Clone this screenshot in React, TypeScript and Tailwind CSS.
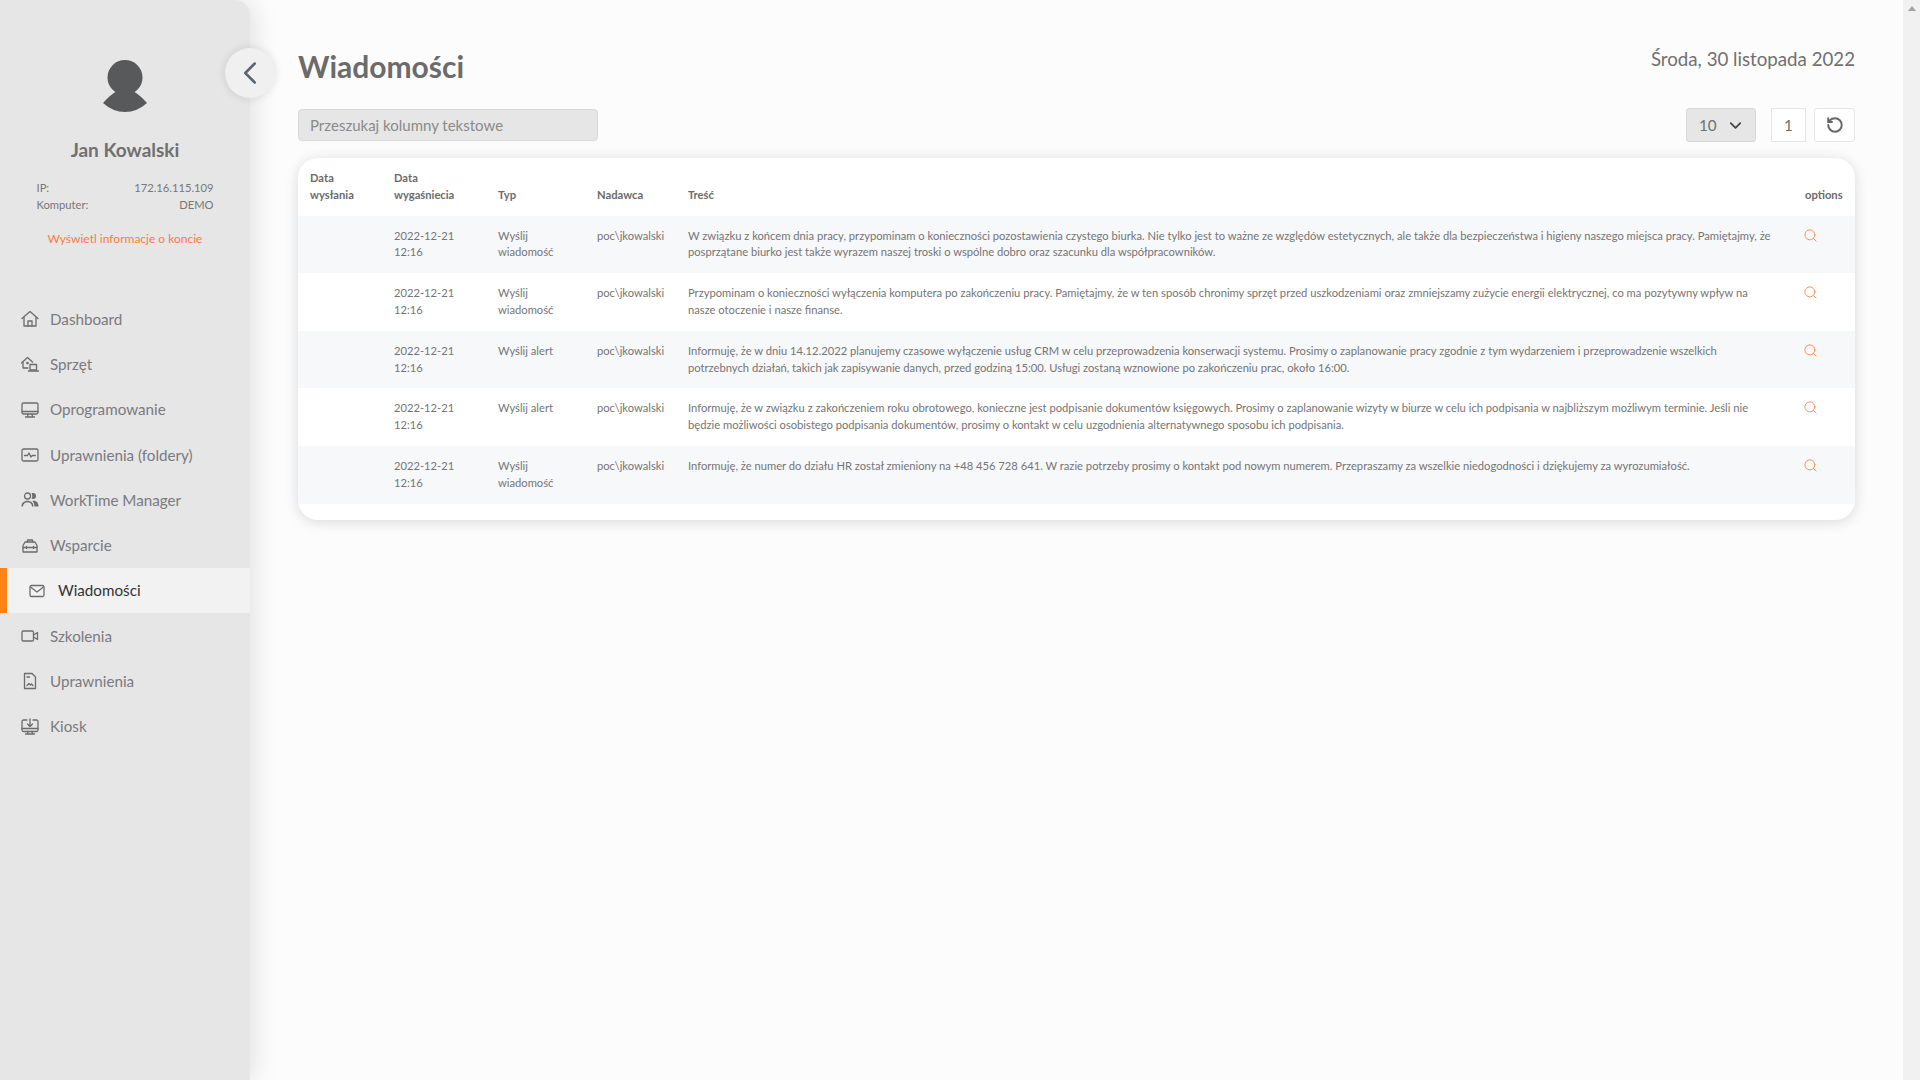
import React from 'react';
import { ChevronDown, ChevronLeft, RotateCcw, Search } from 'lucide-react';

const iconProps = {
  width: 18,
  height: 18,
  viewBox: '0 0 18 18',
  fill: 'none',
  stroke: 'currentColor',
  strokeWidth: 1.3,
  strokeLinecap: 'round' as const,
  strokeLinejoin: 'round' as const,
};

const HomeIcon = () => (
  <svg {...iconProps}>
    <path d="M1 8.500 9 1.500l8 7" />
    <path d="M3 7.500V16h12V7.500" />
    <path d="M7 16v-5h4v5" />
  </svg>
);

const HardwareIcon = () => (
  <svg {...iconProps}>
    <path d="M.5 8 6.500 2.500 11.500 7" />
    <path d="M2 7.500V13h5" />
    <circle cx="6.500" cy="8" r="0.700" fill="currentColor" />
    <rect x="9" y="9.500" width="6.500" height="5.500" />
    <path d="M7.500 16h10" />
  </svg>
);

const SoftwareIcon = () => (
  <svg {...iconProps}>
    <rect x="1" y="2" width="16" height="11" rx="1.500" />
    <path d="M1 10.500h16M7 13l-.5 3M11 13l.5 3M4.500 16h9" />
  </svg>
);

const ActivityIcon = () => (
  <svg {...iconProps}>
    <rect x="1" y="3" width="16" height="12" rx="1.500" />
    <path d="M3.500 9.500h3l1.500-2.500 2 4 1.300-1.500h3" />
  </svg>
);

const UsersIcon = () => (
  <svg width="18" height="18" viewBox="0 0 18 18" fill="currentColor">
    <circle cx="6.500" cy="5" r="3" fill="none" stroke="currentColor" strokeWidth="1.300" />
    <path d="M12 2a3 3 0 0 1 0 6c-.6 0-1-.2-1.400-.4a4.800 4.800 0 0 0 0-5.200C11 2.200 11.400 2 12 2Z" />
    <path d="M.5 15.500c0-3.500 2.500-5.700 6-5.700s6 2.200 6 5.700h-1.500c0-2.500-1.800-4.200-4.500-4.200S2 13 2 15.500Z" />
    <path d="M13.500 15.500c0-2-.6-4-2-5.500 3.700-.8 6 1.800 6 5.500Z" />
  </svg>
);

const ToolboxIcon = () => (
  <svg {...iconProps}>
    <path d="M2 8.500 4 5h10l2 3.500V15H2Z" />
    <path d="M6.500 5V3h5v2M2 10.500h14" />
    <path d="M5.500 9.500v2M12.500 9.500v2" />
  </svg>
);

const MailIcon = () => (
  <svg width="16" height="16" viewBox="0 0 16 16" fill="none" stroke="currentColor" strokeWidth="1.300" strokeLinejoin="round">
    <rect x="1" y="2.500" width="14" height="11" rx="1.500" />
    <path d="m1.500 4 6.500 5 6.500-5" />
  </svg>
);

const VideoIcon = () => (
  <svg {...iconProps}>
    <rect x="1" y="4" width="11.500" height="10" rx="1.200" />
    <path d="m12.500 8 4-2.500v7l-4-2.500" />
  </svg>
);

const DocIcon = () => (
  <svg {...iconProps}>
    <path d="M3.500 1.500H11L14.500 5v11.500h-11Z" />
    <path d="M6 5h2.500M6 13.500l2-2 1.500 1.500 1-1 1.500 1.500" />
  </svg>
);

const KioskIcon = () => (
  <svg {...iconProps}>
    <path d="M6 2H2.500A1.500 1.500 0 0 0 1 3.500V12a1.500 1.500 0 0 0 1.500 1.500h13A1.500 1.500 0 0 0 17 12V3.500A1.500 1.500 0 0 0 15.500 2H12" />
    <path d="M9 1v7M6.500 6 9 8.500 11.500 6M1 10.500h16M7 13.500l-.5 2.500M11 13.500l.5 2.500M4.500 16h9" />
  </svg>
);

const menu = [
  { label: 'Dashboard', icon: <HomeIcon /> },
  { label: 'Sprzęt', icon: <HardwareIcon /> },
  { label: 'Oprogramowanie', icon: <SoftwareIcon /> },
  { label: 'Uprawnienia (foldery)', icon: <ActivityIcon /> },
  { label: 'WorkTime Manager', icon: <UsersIcon /> },
  { label: 'Wsparcie', icon: <ToolboxIcon /> },
  { label: 'Wiadomości', icon: <MailIcon />, active: true },
  { label: 'Szkolenia', icon: <VideoIcon /> },
  { label: 'Uprawnienia', icon: <DocIcon /> },
  { label: 'Kiosk', icon: <KioskIcon /> },
];

const rows = [
  {
    type: 'Wyślij wiadomość',
    body: 'W związku z końcem dnia pracy, przypominam o konieczności pozostawienia czystego biurka. Nie tylko jest to ważne ze względów estetycznych, ale także dla bezpieczeństwa i higieny naszego miejsca pracy. Pamiętajmy, że posprzątane biurko jest także wyrazem naszej troski o wspólne dobro oraz szacunku dla współpracowników.',
  },
  {
    type: 'Wyślij wiadomość',
    body: 'Przypominam o konieczności wyłączenia komputera po zakończeniu pracy. Pamiętajmy, że w ten sposób chronimy sprzęt przed uszkodzeniami oraz zmniejszamy zużycie energii elektrycznej, co ma pozytywny wpływ na nasze otoczenie i nasze finanse.',
  },
  {
    type: 'Wyślij alert',
    body: 'Informuję, że w dniu 14.12.2022 planujemy czasowe wyłączenie usług CRM w celu przeprowadzenia konserwacji systemu. Prosimy o zaplanowanie pracy zgodnie z tym wydarzeniem i przeprowadzenie wszelkich potrzebnych działań, takich jak zapisywanie danych, przed godziną 15:00. Usługi zostaną wznowione po zakończeniu prac, około 16:00.',
  },
  {
    type: 'Wyślij alert',
    body: 'Informuję, że w związku z zakończeniem roku obrotowego, konieczne jest podpisanie dokumentów księgowych. Prosimy o zaplanowanie wizyty w biurze w celu ich podpisania w najbliższym możliwym terminie. Jeśli nie będzie możliwości osobistego podpisania dokumentów, prosimy o kontakt w celu uzgodnienia alternatywnego sposobu ich podpisania.',
  },
  {
    type: 'Wyślij wiadomość',
    body: 'Informuję, że numer do działu HR został zmieniony na +48 456 728 641. W razie potrzeby prosimy o kontakt pod nowym numerem. Przepraszamy za wszelkie niedogodności i dziękujemy za wyrozumiałość.',
  },
];

const Sidebar = () => (
  <aside className="relative w-[250px] h-[1080px] shrink-0 bg-[#e6e6e6] rounded-tr-[15px] shadow-[5px_0_25px_rgba(0,0,0,0.1)] z-10">
    <div className="flex flex-col items-center pt-[60px]">
      <svg width="44" height="52" viewBox="0 0 44 52" className="text-[#58595b]">
        <circle cx="22" cy="17.500" r="17.500" fill="currentColor" />
        <path d="M0 43 Q7 35 14 31 Q22 36 30 31 Q37 35 44 43 Q34 52 22 52 Q10 52 0 43Z" fill="currentColor" />
      </svg>
      <div className="mt-[26px] text-[19px] leading-[24px] font-bold text-[#707070]">Jan Kowalski</div>
      <div className="mt-[17px] w-[177px] text-[11.200px] leading-[17px] text-[#777]">
        <div className="flex justify-between">
          <span>IP:</span>
          <span>172.16.115.109</span>
        </div>
        <div className="flex justify-between">
          <span>Komputer:</span>
          <span>DEMO</span>
        </div>
      </div>
      <div className="mt-[17px] text-[12px] leading-[17px] text-[#ff7b3d]">Wyświetl informacje o koncie</div>
    </div>
    <nav className="mt-[49.400px]">
      {menu.map(item => (
        <div
          key={item.label}
          className={
            item.active
              ? 'flex items-center h-[45.300px] pl-[22px] bg-[#f2f2f2] border-l-[7px] border-[#ff8317] text-[15.200px] text-[#333]'
              : 'flex items-center h-[45.300px] pl-[21px] text-[15.200px] text-[#7a7a7f]'
          }
        >
          <span className="w-[29px] text-[#6c6c6c]">{item.icon}</span>
          <span>{item.label}</span>
        </div>
      ))}
    </nav>
  </aside>
);

const MessagesTable = () => (
  <div className="mt-[16px] h-[362px] bg-white rounded-[20px] shadow-[0_2px_14px_rgba(0,0,0,0.14)] overflow-hidden">
    <table className="w-full table-fixed border-collapse text-[11.200px] leading-[16.800px] text-[#757575] text-left">
      <thead>
        <tr className="align-bottom text-[#6b6b6b]">
          <th className="w-[84px] p-[12px] font-bold">Data wysłania</th>
          <th className="w-[104px] p-[12px] font-bold">Data wygaśniecia</th>
          <th className="w-[99px] p-[12px] font-bold">Typ</th>
          <th className="w-[91px] p-[12px] font-bold">Nadawca</th>
          <th className="p-[12px] font-bold">Treść</th>
          <th className="w-[63px] py-[12px] pl-[13px] pr-0 font-bold">options</th>
        </tr>
      </thead>
      <tbody>
        {rows.map((row, i) => (
          <tr key={i} className="h-[57.600px] align-top odd:bg-[#f7f8fa]">
            <td className="p-[12px]" />
            <td className="p-[12px]">2022-12-21 12:16</td>
            <td className="p-[12px]">{row.type}</td>
            <td className="p-[12px] pr-0">poc\jkowalski</td>
            <td className="py-[12px] pl-[12px] pr-[17px]">{row.body}</td>
            <td className="p-[12px] text-[#ff8a52]">
              <Search size={15} strokeWidth={1.500} className="-ml-[1px]" />
            </td>
          </tr>
        ))}
      </tbody>
    </table>
  </div>
);

const App: React.FC = () => {
  return (
    <div className="relative flex h-[1080px] overflow-hidden bg-[#fcfcfc] font-['Lato','Open_Sans',sans-serif]">
      <Sidebar />
      <button className="absolute left-[225px] top-[48px] z-20 flex h-[50px] w-[50px] items-center justify-center rounded-full bg-[#f0f0f0] text-[#5c6670] shadow-[0_0_10px_rgba(0,0,0,0.12)]">
        <ChevronLeft size={38} strokeWidth={1.600} />
      </button>

      <main className="flex-1 pl-[48px] pr-[48px]">
        <div className="flex items-start justify-between pt-[46px]">
          <h1 className="text-[30px] leading-[40px] font-bold text-[#6b6b6b]">Wiadomości</h1>
          <div className="text-[18.700px] leading-[26px] text-[#707070]">Środa, 30 listopada 2022</div>
        </div>
        <div className="mt-[22px] flex items-center justify-between">
          <div className="flex h-[32px] w-[300px] items-center rounded-[4px] border border-[#d8d8d8] bg-[#e6e6e6] px-[11px] text-[15px] text-[#8a8a8a]">
            Przeszukaj kolumny tekstowe
          </div>
          <div className="flex items-center">
            <div className="flex h-[34px] w-[70px] items-center justify-between rounded-[3px] border border-[#d8d8d8] bg-[#e6e6e6] pl-[12px] pr-[10px] text-[15.200px] text-[#707070]">
              10
              <ChevronDown size={19} strokeWidth={2.200} className="text-[#444]" />
            </div>
            <div className="ml-[15px] flex h-[34px] w-[35px] items-center justify-center border border-[#e4e6e8] bg-white text-[15.200px] text-[#707070]">
              1
            </div>
            <div className="ml-[8px] flex h-[34px] w-[41px] items-center justify-center rounded-[3px] border border-[#e4e6e8] bg-white text-[#666]">
              <RotateCcw size={18} strokeWidth={2.600} />
            </div>
          </div>
        </div>
        <MessagesTable />
      </main>

      <div className="w-[17px] shrink-0 bg-[#f1f1f1] flex justify-center pt-[6px]">
        <div className="h-0 w-0 border-x-[4.500px] border-b-[5px] border-x-transparent border-b-[#a3a3a3]" />
      </div>
    </div>
  );
};

export default App;
